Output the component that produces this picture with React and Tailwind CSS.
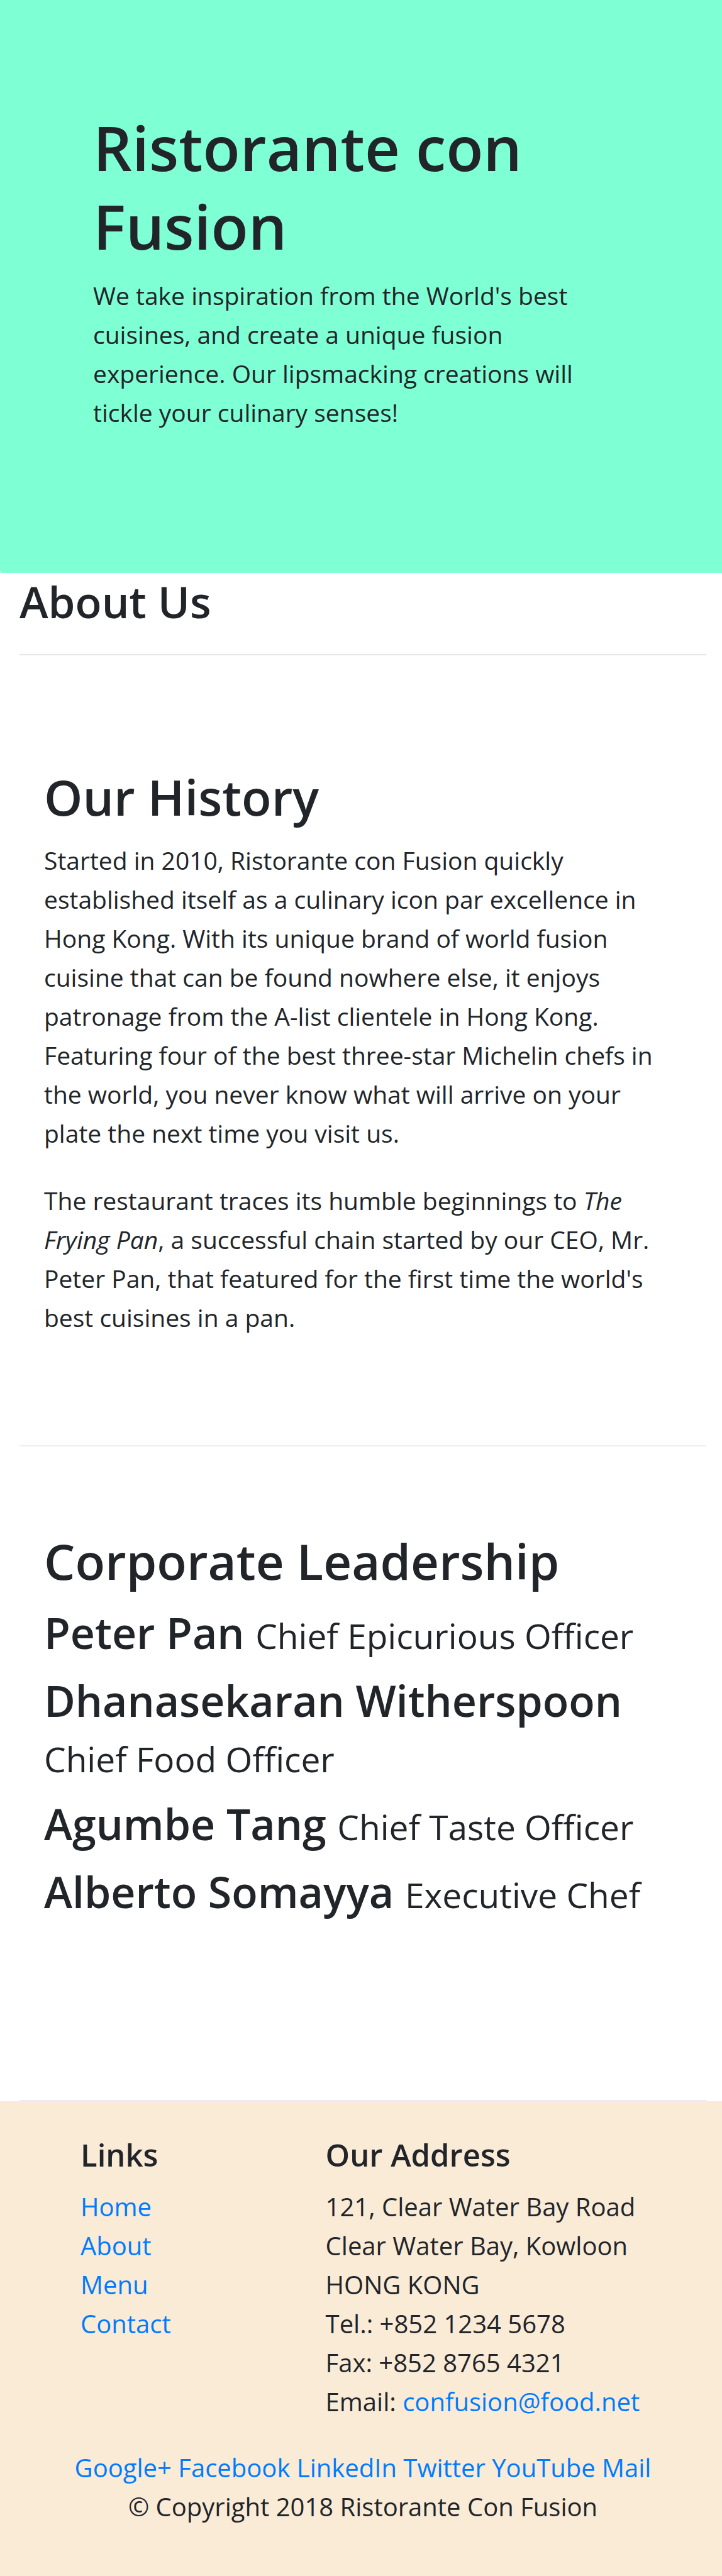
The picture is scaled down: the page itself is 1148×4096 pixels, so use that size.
import React from "react";

const leaders = [
  { name: "Peter Pan", role: "Chief Epicurious Officer" },
  { name: "Dhanasekaran Witherspoon", role: "Chief Food Officer" },
  { name: "Agumbe Tang", role: "Chief Taste Officer" },
  { name: "Alberto Somayya", role: "Executive Chef" },
];

const pages = ["Home", "About", "Menu", "Contact"];

const social = ["Google+", "Facebook", "LinkedIn", "Twitter", "YouTube", "Mail"];

function Hero() {
  return (
    <header className="rounded-bl-[4px] bg-[#7fffd4] pt-[172px] pr-[160px] pb-[224px] pl-[148px]">
      <h1 className="text-[97px] leading-[125px] font-semibold">Ristorante con Fusion</h1>
      <p className="mt-[17px] text-[39px] leading-[62px]">
        We take inspiration from the World's best cuisines, and create a unique fusion experience.
        Our lipsmacking creations will tickle your culinary senses!
      </p>
    </header>
  );
}

function History() {
  return (
    <section className="px-[39px] pt-[176px] pb-[172px]">
      <h2 className="mb-[21px] text-[78px] leading-[98px] font-semibold">Our History</h2>
      <div className="flex flex-col gap-[45px] text-[39px] leading-[62px]">
        <p>
          Started in 2010, Ristorante con Fusion quickly established itself as a culinary icon par
          excellence in Hong Kong. With its unique brand of world fusion cuisine that can be found
          nowhere else, it enjoys patronage from the A-list clientele in Hong Kong. Featuring four
          of the best three-star Michelin chefs in the world, you never know what will arrive on
          your plate the next time you visit us.
        </p>
        <p>
          The restaurant traces its humble beginnings to <em>The Frying Pan</em>, a successful chain
          started by our CEO, Mr. Peter Pan, that featured for the first time the world's best
          cuisines in a pan.
        </p>
      </div>
    </section>
  );
}

function Leadership() {
  return (
    <section className="px-[39px] pt-[133px] pb-[287px]">
      <h2 className="mb-[21px] text-[78px] leading-[98px] font-semibold">Corporate Leadership</h2>
      <div className="flex flex-col gap-[20px]">
        {leaders.map(({ name, role }) => (
          <h3 key={name} className="text-[68px] leading-[88px] font-semibold">
            {name} <small className="text-[55px] leading-none font-normal">{role}</small>
          </h3>
        ))}
      </div>
    </section>
  );
}

function Footer() {
  return (
    <footer className="bg-[#faebd7] pt-[54px] pb-[79px] text-[40px] leading-[62px]">
      <div className="grid grid-cols-[2fr_3fr] pr-[46px] pl-[128px]">
        <nav aria-label="Links">
          <h4 className="mb-[21px] text-[49px] leading-[62px] font-semibold">Links</h4>
          <ul>
            {pages.map((page) => (
              <li key={page}>
                <a href="#" className="text-[#007bff]">
                  {page}
                </a>
              </li>
            ))}
          </ul>
        </nav>
        <div>
          <h4 className="mb-[21px] text-[49px] leading-[62px] font-semibold">Our Address</h4>
          <address className="not-italic">
            121, Clear Water Bay Road
            <br />
            Clear Water Bay, Kowloon
            <br />
            HONG KONG
            <br />
            Tel.: +852 1234 5678
            <br />
            Fax: +852 8765 4321
            <br />
            Email:{" "}
            <a href="mailto:confusion@food.net" className="text-[#007bff]">
              confusion@food.net
            </a>
          </address>
        </div>
      </div>
      <div className="mt-[43px] pr-[25px] pl-[31px] text-center">
        <p>
          {social.map((site) => (
            <React.Fragment key={site}>
              <a href="#" className="text-[#007bff]">
                {site}
              </a>{" "}
            </React.Fragment>
          ))}
        </p>
        <p>© Copyright 2018 Ristorante Con Fusion</p>
      </div>
    </footer>
  );
}

export default function App() {
  return (
    <div className="bg-white font-['Open_Sans','Noto_Sans',sans-serif] text-[#212529]">
      <Hero />
      <main className="pr-[25px] pl-[31px]">
        <h2 className="border-b-2 border-[#e5e5e5] pt-[1px] pb-[40px] text-[69px] leading-[88px] font-semibold">
          About Us
        </h2>
        <History />
        <hr className="border-t-2 border-[#eeeeee]" />
        <Leadership />
        <hr className="border-t-2 border-[#ececee]" />
      </main>
      <Footer />
    </div>
  );
}
